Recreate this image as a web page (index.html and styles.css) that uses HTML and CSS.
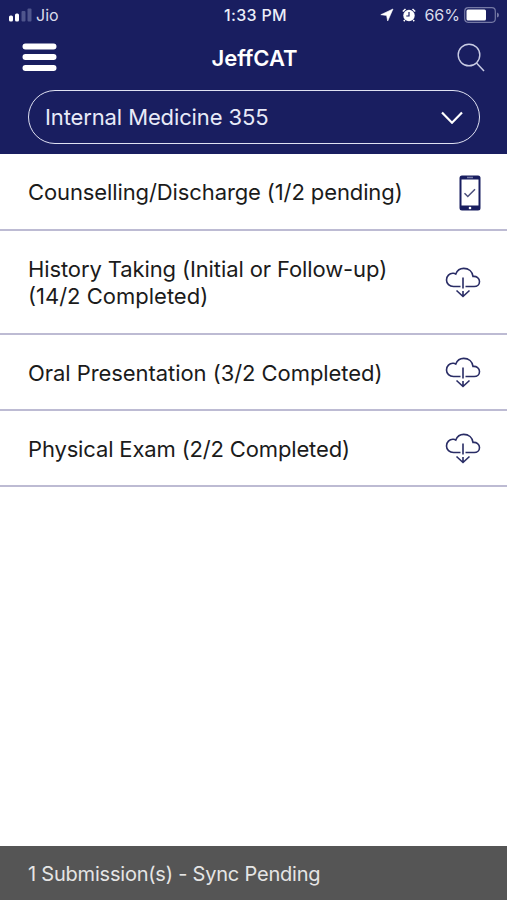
FILE: index.html
```html
<!DOCTYPE html>
<html lang="en">
<head>
<meta charset="utf-8">
<title>JeffCAT</title>
<link rel="stylesheet" href="styles.css">
</head>
<body>
<svg class="defs" width="0" height="0" aria-hidden="true">
  <symbol id="cloud" viewBox="0 0 36 34">
    <path d="M15.500 20.500H8.500C4.500 20.500 1.500 17.600 1.500 13.900C1.500 10 4.500 7.200 8 7.300C9 7.200 10 7.500 10.800 8C12.200 4.400 15 2.400 18.700 2.400C23.700 2.400 27.400 5.600 28 10.400C31.600 10 34.500 12.200 34.500 15.400C34.500 18.400 32.200 20.500 29.200 20.500H20.500"/>
    <path d="M18 11.500V22.500M18 25V30M11.500 24.500L18 30.500L24.500 24.500"/>
  </symbol>
</svg>
<div class="app">
  <header class="header">
    <div class="status">
      <div class="carrier">
        <svg width="24" height="14" viewBox="0 0 24 14"><rect x="1" y="7.500" width="4" height="6" rx="1.500" fill="#fff"/><rect x="7" y="5.500" width="4" height="8" rx="1.500" fill="#fff"/><rect x="13.500" y="3" width="4" height="10.500" rx="1" fill="#4f558c"/><rect x="19.500" y=".5" width="4" height="13" rx="1" fill="#4f558c"/></svg>
        <span class="jio">Jio</span>
      </div>
      <span class="time">1:33 PM</span>
      <div class="indicators">
        <svg width="14" height="14" viewBox="0 0 14 14"><path d="M13 1L7.700 13L6.600 7.400L.8 6.700Z" fill="#fff" stroke="#fff" stroke-width=".6" stroke-linejoin="round"/></svg>
        <svg width="14" height="14" viewBox="0 0 14 14"><circle cx="7" cy="7.500" r="5.700" fill="#fff"/><path d="M.8 3.500L3.500 1M13.200 3.500L10.500 1M2.800 12L1.800 13.300M11.200 12L12.200 13.300" stroke="#fff" stroke-width="1.500"/><path d="M7 4V8H4.300" fill="none" stroke="#191e60" stroke-width="1.200"/></svg>
        <span class="percent">66%</span>
        <svg width="36" height="16" viewBox="0 0 36 16"><rect x=".7" y=".7" width="30.600" height="14.600" rx="3.500" fill="none" stroke="#7579a5" stroke-width="1.200"/><rect x="2.500" y="2.500" width="19.500" height="11" rx="1.500" fill="#fff"/><path d="M33 5.500Q35 6 35 8T33 10.500Z" fill="#7579a5"/></svg>
      </div>
    </div>
    <nav class="nav">
      <svg width="36" height="28" viewBox="0 0 36 28"><path d="M3.500 3.500H31.500M3.500 14H31.500M3.500 25H31.500" stroke="#fff" stroke-width="6" stroke-linecap="round"/></svg>
      <h1 class="title">JeffCAT</h1>
      <svg width="28" height="29" viewBox="0 0 28 29"><circle cx="12" cy="12" r="10.800" fill="none" stroke="#c9cce4" stroke-width="1.400"/><path d="M19.500 20L27 28" stroke="#c9cce4" stroke-width="1.500"/></svg>
    </nav>
    <div class="select">
      <span class="course">Internal Medicine 355</span>
      <svg width="24" height="14" viewBox="0 0 24 14"><path d="M2 2.500L12 12.700L22 2.500" fill="none" stroke="#fff" stroke-width="2.200"/></svg>
    </div>
  </header>
  <main class="list">
    <div class="row first"><span class="counselling">Counselling/Discharge (1/2 pending)</span>
      <svg class="phone" width="22" height="36" viewBox="0 0 22 36"><rect x=".5" y=".5" width="21" height="35" rx="2.500" fill="#191e60"/><path d="M2.500 4.500H19.500V30.500H2.500Z" fill="#fff"/><path d="M8 2.500H14" stroke="#777ba6" stroke-width="1.500"/><circle cx="11" cy="33" r="1.300" fill="#fff"/><path d="M5.500 18.200L8.800 21.500L16 14.200" fill="none" stroke="#4c4f7c" stroke-width="1.500"/></svg></div>
    <div class="row tall"><span class="history">History Taking (Initial or Follow-up)<br><span class="history-count">(14/2 Completed)</span></span><svg class="cloud"><use href="#cloud"/></svg></div>
    <div class="row"><span class="oral">Oral Presentation (3/2 Completed)</span><svg class="cloud"><use href="#cloud"/></svg></div>
    <div class="row"><span class="physical">Physical Exam (2/2 Completed)</span><svg class="cloud"><use href="#cloud"/></svg></div>
  </main>
  <footer class="sync"><span class="sync-text">1 Submission(s) - Sync Pending</span></footer>
</div>
</body>
</html>
```

FILE: styles.css
```css
* { box-sizing: border-box; }
body { margin: 0; background: #fff; font-family: Inter, "Liberation Sans", sans-serif; }
svg { display: block; flex: none; }
.defs { position: absolute; }
.app { height: 900px; display: flex; flex-direction: column; }
.header { height: 154px; background: #191e60; color: #fff; flex: none; }
.status { height: 30px; display: grid; grid-template-columns: 1fr auto 1fr; align-items: center; padding: 0 7px 0 8px; font-size: 16px; }
.carrier { display: flex; align-items: center; gap: 4px; color: #d9dbea; }
.time { padding-left: 3px; font-weight: 500; letter-spacing: .3px; color: #eceef8; }
.indicators { display: flex; align-items: center; justify-content: flex-end; gap: 8px; color: #d9dbea; }
.indicators svg:last-child { margin-left: -4px; }
.nav { height: 60px; padding: 0 22px 6px; display: grid; grid-template-columns: 1fr auto 1fr; align-items: center; }
.nav svg:last-child { justify-self: end; }
.title { margin: 0; padding: 2px 0 0 2px; font-size: 22px; font-weight: 600; line-height: 28px; }
.select { height: 54px; margin: 0 27px 0 28px; padding: 0 15px 0 16px; border: 1.500px solid #dfe1f2; border-radius: 27px; display: flex; align-items: center; justify-content: space-between; font-size: 22px; color: #e8eaf8; }
.course { letter-spacing: -.12px; }
.list { flex: 1; }
.row { height: 76px; padding: 2px 26px 0 28px; border-bottom: 2px solid #bdbbd3; display: flex; align-items: center; justify-content: space-between; font-size: 22px; line-height: 27px; color: #1b1b1b; white-space: nowrap; }
.first { height: 77px; }
.tall { height: 104px; padding-top: 1px; }
.counselling, .history { letter-spacing: -.11px; }
.history-count { letter-spacing: 0; }
.oral { letter-spacing: -.06px; }
.physical { letter-spacing: -.15px; }
.cloud { width: 36px; height: 34px; fill: none; stroke: #292c65; stroke-width: 1.600; }
.sync { height: 54px; padding: 2px 28px 0; background: #555; color: #e5e5e5; display: flex; align-items: center; font-size: 20px; letter-spacing: -.21px; }
```
